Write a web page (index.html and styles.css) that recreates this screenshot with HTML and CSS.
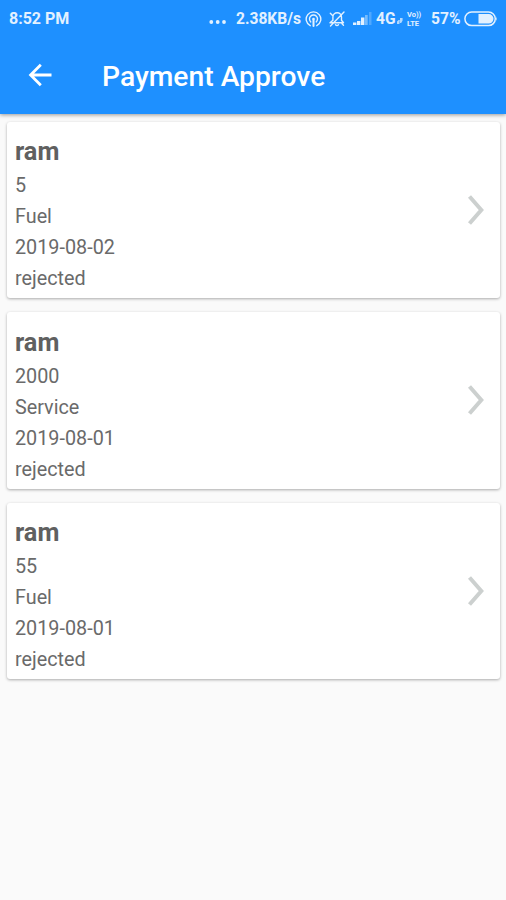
FILE: index.html
```
<!DOCTYPE html>
<html lang="en">
<head>
<meta charset="utf-8">
<title>Payment Approve</title>
<link rel="stylesheet" href="styles.css">
</head>
<body>
<header class="top">
  <div class="status">
    <span class="time">8:52 PM</span>
    <svg class="dots" width="18" height="6" viewBox="0 0 18 6" fill="currentColor"><circle cx="2.3" cy="3" r="1.9"/><circle cx="8.7" cy="3" r="1.9"/><circle cx="15" cy="3" r="1.9"/></svg>
    <span class="speed">2.38KB/s</span>
    <svg class="hotspot" width="17" height="18" viewBox="0 0 17 18" fill="none" stroke="currentColor" stroke-width="1.4" stroke-linecap="round"><path d="M5.2 15.7a7.3 7.3 0 1 1 6.6 0"/><path d="M5.8 11.9a4 4 0 1 1 5.4 0"/><circle cx="8.5" cy="9" r="1.3" fill="currentColor" stroke="none"/><path d="M8.5 10v6" stroke-width="2"/></svg>
    <svg class="bell" width="18" height="18" viewBox="0 0 18 18" fill="none" stroke="currentColor" stroke-width="1.4" stroke-linecap="round" stroke-linejoin="round"><path d="M2 12.8h13.5l-2-2.5V7a4.3 4.3 0 0 0-8.6 0v3.3zM7.5 14.8q1.5 1.5 3 0M16 2 2.5 16M2.3 3.2l2 2M14 13.8l1.5 1.5"/></svg>
    <svg class="signal" width="19" height="14" viewBox="0 0 19 14" fill="currentColor"><path d="M0 10.5h3.4V13H0zM4 9h3.4v4H4zM8 5.5h3.4V13H8z"/><path d="M12 3h2.7v10H12z" opacity=".45"/><path d="M16 0h2.5v13H16z" opacity=".25"/></svg>
    <span class="net">4G</span>
    <svg class="data" width="6" height="6" viewBox="0 0 6 6" fill="currentColor"><path d="M0 6V3.5L1.6 2h1.2L2.4 6zM3 5V0h2.6v2.6L4.2 5z" opacity=".75"/></svg>
    <span class="volte"><span>Vo))</span><span>LTE</span></span>
    <span class="percent">57%</span>
    <svg class="battery" width="34" height="16" viewBox="0 0 34 16"><rect x=".9" y="1" width="30.4" height="13.6" rx="6.8" fill="none" stroke="currentColor" stroke-width="1.5"/><path d="M14.5 3h10.2a4.8 4.8 0 0 1 0 9.6H14.5zM32.3 5.5q1.4 2.3 0 4.6z" fill="currentColor"/></svg>
  </div>
  <div class="toolbar">
    <svg class="back" width="24" height="24" viewBox="0 0 24 24" fill="none" stroke="currentColor" stroke-width="2.8"><path d="M12.8 1.8 2.6 12l10.2 10.2M2.8 12h20.7"/></svg>
    <h1>Payment Approve</h1>
  </div>
</header>
<main class="list">
  <article class="card">
    <div class="info"><h2>ram</h2><p>5</p><p>Fuel</p><p>2019-08-02</p><p>rejected</p></div>
    <svg class="chevron" width="18" height="32" viewBox="0 0 18 32"><path d="M2.5 2.5 14.3 16 2.5 29.5"/></svg>
  </article>
  <article class="card">
    <div class="info"><h2>ram</h2><p>2000</p><p>Service</p><p>2019-08-01</p><p>rejected</p></div>
    <svg class="chevron" width="18" height="32" viewBox="0 0 18 32"><path d="M2.5 2.5 14.3 16 2.5 29.5"/></svg>
  </article>
  <article class="card">
    <div class="info"><h2>ram</h2><p>55</p><p>Fuel</p><p>2019-08-01</p><p>rejected</p></div>
    <svg class="chevron" width="18" height="32" viewBox="0 0 18 32"><path d="M2.5 2.5 14.3 16 2.5 29.5"/></svg>
  </article>
</main>
</body>
</html>
```
FILE: styles.css
```
* { box-sizing: border-box; }
body {
  margin: 0;
  min-height: 900px;
  background: #fafafa;
  color: #6a6a6a;
  font-family: Roboto, sans-serif;
}
svg { flex: none; display: block; }
h1, h2, p { margin: 0; }
.top {
  height: 114px;
  background: #1e90ff;
  color: #fff;
  box-shadow: 0 1px 4px rgba(0, 0, 0, .4);
}
.status {
  height: 37px;
  display: flex;
  align-items: center;
  padding: 0 0 0 9px;
  color: #e3f1ff;
  font-size: 16px;
  font-weight: 700;
  white-space: nowrap;
}
.status > * { flex: none; }
.time { width: 200px; }
.dots { margin-top: 7px; }
.speed { width: 66px; margin-left: 9px; font-size: 15.6px; }
.hotspot { margin-left: 3px; }
.bell { margin-left: 6px; }
.signal { margin-left: 7px; }
.net { width: 20px; margin-left: 4px; font-size: 15.6px; }
.data { margin: 5px 0 0 1px; }
.volte {
  width: 16px;
  margin-left: 4px;
  display: flex;
  flex-direction: column;
  font-size: 7.5px;
  line-height: 9px;
}
.percent { width: 30px; margin-left: 8px; font-size: 15.6px; }
.battery { margin-left: 3px; }
.toolbar {
  height: 77px;
  display: flex;
  align-items: center;
  padding: 0 0 1px 28px;
}
h1 {
  margin: 3px 0 0 50px;
  font-size: 28.25px;
  line-height: 34px;
  font-weight: 500;
}
.list {
  display: flex;
  flex-direction: column;
  gap: 14px;
  padding: 7.5px 6px 0 7px;
}
.card {
  height: 176.6px;
  display: flex;
  align-items: center;
  justify-content: space-between;
  padding: 0 15px 0 8px;
  border-radius: 3px;
  background: #fff;
  box-shadow: 0 1px 3px rgba(0, 0, 0, .32);
}
h2 {
  margin-bottom: 2px;
  font-size: 25.3px;
  line-height: 32px;
  font-weight: 700;
  color: #606060;
}
.info { padding-top: 11px; }
.info p {
  font-size: 19.8px;
  line-height: 31px;
}
.chevron {
  fill: none;
  stroke: #ccd0cf;
  stroke-width: 4;
}
```
